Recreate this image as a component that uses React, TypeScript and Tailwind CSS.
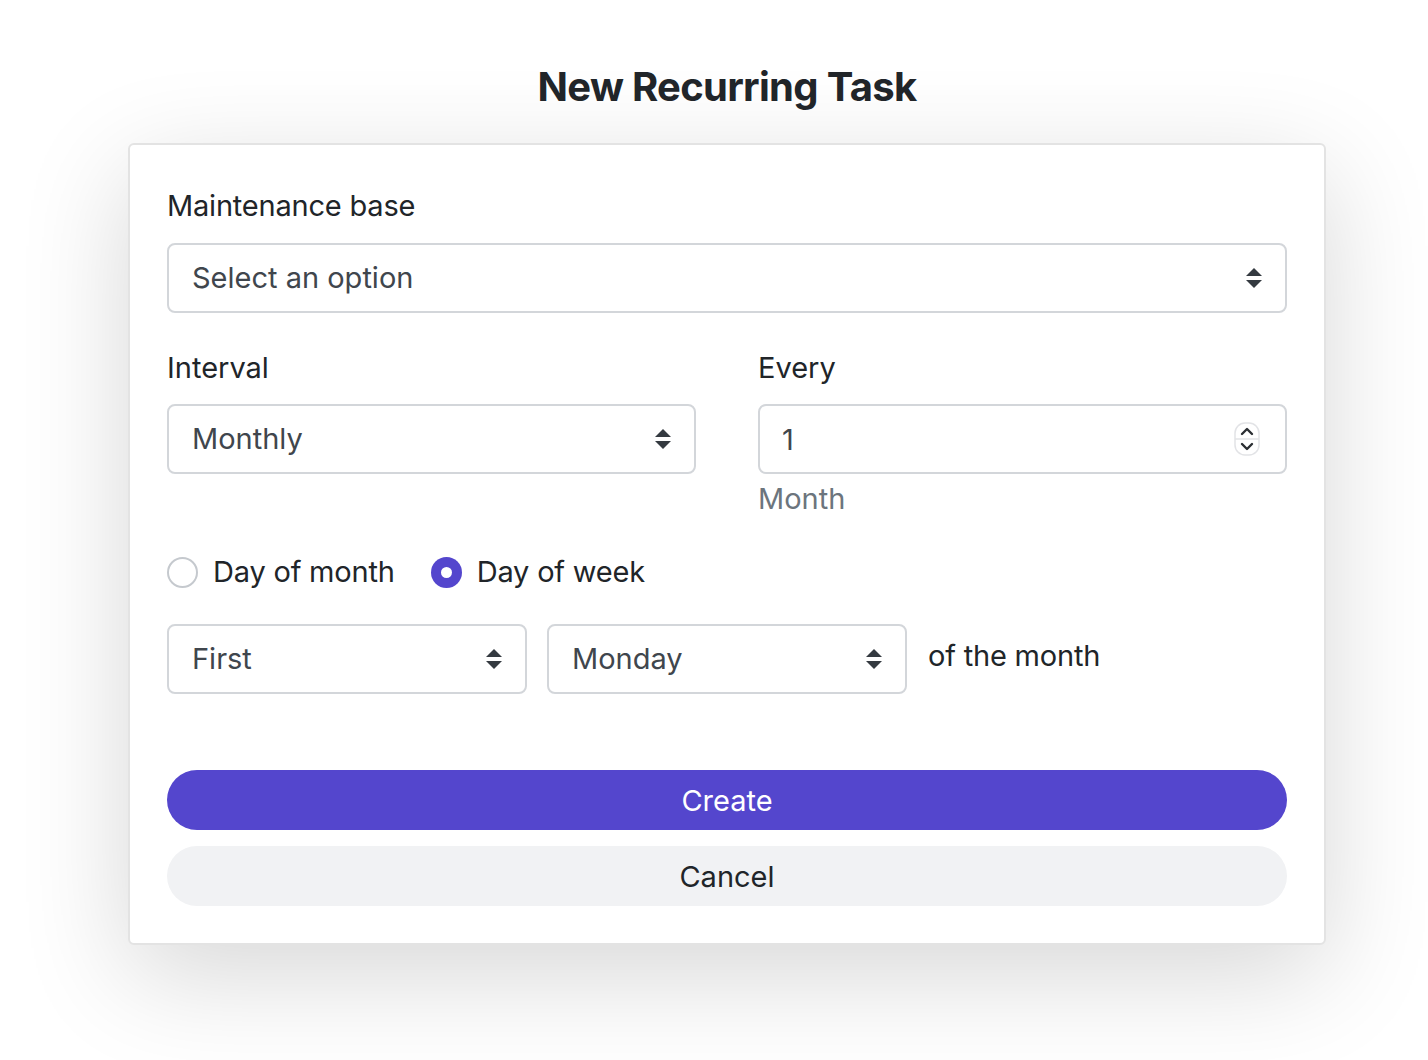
import { useState } from 'react';

const FONT = { fontFamily: 'Inter, "Noto Sans", sans-serif' };

const SELECT_CLS =
  'w-full h-[70px] appearance-none rounded-[8px] border-2 border-[#d3d6da] bg-white pl-[23px] pr-[60px] text-[29px] text-[#40464d] outline-none';

function UpDownArrows() {
  return (
    <svg width="18" height="22" viewBox="0 0 18 22" className="pointer-events-none absolute right-[24px] top-1/2 -translate-y-1/2">
      <path d="M9 1 L17 9 L1 9 Z" fill="#343a40" />
      <path d="M9 21 L17 13 L1 13 Z" fill="#343a40" />
    </svg>
  );
}

function Spinner() {
  return (
    <svg width="26" height="34" viewBox="0 0 26 34" className="pointer-events-none absolute right-[27px] top-1/2 -translate-y-1/2">
      <rect x="1" y="1" width="24" height="32" rx="10" fill="#fff" stroke="#e2e3e6" strokeWidth="1.5" />
      <line x1="1" y1="17" x2="25" y2="17" stroke="#e2e3e6" strokeWidth="1.5" />
      <path d="M8 12 L13 7 L18 12" fill="none" stroke="#2b2f33" strokeWidth="2.4" strokeLinecap="round" strokeLinejoin="round" />
      <path d="M8 22 L13 27 L18 22" fill="none" stroke="#2b2f33" strokeWidth="2.4" strokeLinecap="round" strokeLinejoin="round" />
    </svg>
  );
}

function Select({ value, options }: { value: string; options: string[] }) {
  return (
    <div className="relative">
      <select className={SELECT_CLS} defaultValue={value} style={FONT}>
        {options.map(o => (
          <option key={o} value={o}>{o}</option>
        ))}
      </select>
      <UpDownArrows />
    </div>
  );
}

function Radio({ checked, label, onClick }: { checked: boolean; label: string; onClick: () => void }) {
  return (
    <button type="button" onClick={onClick} className="flex items-center gap-[15px]">
      {checked ? (
        <span className="flex h-[31px] w-[31px] items-center justify-center rounded-full bg-[#5446cd]">
          <span className="h-[11px] w-[11px] rounded-full bg-white" />
        </span>
      ) : (
        <span className="h-[31px] w-[31px] rounded-full border-2 border-[#c5c9ce] bg-white" />
      )}
      <span className="text-[29px] leading-[40px] tracking-[-0.2px] text-[#212529]">{label}</span>
    </button>
  );
}

export default function App() {
  const [mode, setMode] = useState<'month' | 'week'>('week');

  return (
    <div className="min-h-[1060px] w-full bg-white" style={FONT}>
      <div className="ml-[128px] w-[1198px] pt-[62px] pb-[116px]">
        <h1 className="text-center text-[40px] font-bold leading-[50px] tracking-[-0.7px] text-[#212529]">
          New Recurring Task
        </h1>

        <div className="mt-[31px] rounded-[6px] border-2 border-[#e3e3e3] bg-white px-[37px] pt-[38px] pb-[37px] shadow-[0_30px_110px_rgba(0,0,0,0.16)]">
          {/* Maintenance base */}
          <label className="block text-[29px] leading-[46px] tracking-[-0.2px] text-[#212529]">Maintenance base</label>
          <div className="mt-[14px]">
            <Select value="" options={['Select an option']} />
          </div>

          {/* Interval / Every */}
          <div className="mt-[35px] grid grid-cols-2 gap-x-[62px]">
            <div>
              <label className="block text-[29px] leading-[40px] text-[#212529]">Interval</label>
              <div className="mt-[16px]">
                <Select value="Monthly" options={['Daily', 'Weekly', 'Monthly', 'Yearly']} />
              </div>
            </div>
            <div>
              <label className="block text-[29px] leading-[40px] text-[#212529]">Every</label>
              <div className="relative mt-[16px]">
                <input
                  type="text"
                  defaultValue="1"
                  className="h-[70px] w-full rounded-[8px] border-2 border-[#d3d6da] bg-white pl-[22px] pr-[60px] text-[29px] text-[#40464d] outline-none"
                  style={FONT}
                />
                <Spinner />
              </div>
              <div className="mt-[5px] text-[29px] leading-[40px] text-[#6c757d]">Month</div>
            </div>
          </div>

          {/* Day mode */}
          <div className="mt-[33px] flex items-center gap-[36px]">
            <Radio checked={mode === 'month'} label="Day of month" onClick={() => setMode('month')} />
            <Radio checked={mode === 'week'} label="Day of week" onClick={() => setMode('week')} />
          </div>

          <div className="mt-[32px] flex items-center gap-[20px]">
            <div className="w-[360px]">
              <Select value="First" options={['First', 'Second', 'Third', 'Fourth', 'Last']} />
            </div>
            <div className="w-[360px]">
              <Select
                value="Monday"
                options={['Monday', 'Tuesday', 'Wednesday', 'Thursday', 'Friday', 'Saturday', 'Sunday']}
              />
            </div>
            <span className="ml-[1px] -mt-[6px] text-[29px] leading-[40px] tracking-[-0.2px] text-[#212529]">of the month</span>
          </div>

          {/* Actions */}
          <div className="mt-[76px] flex flex-col gap-[16px]">
            <button type="button" className="h-[60px] w-full rounded-full bg-[#5446cd] pt-[2px] text-[29px] text-white">
              Create
            </button>
            <button type="button" className="h-[60px] w-full rounded-full bg-[#f1f2f4] pt-[2px] text-[29px] text-[#212529]">
              Cancel
            </button>
          </div>
        </div>
      </div>
    </div>
  );
}
